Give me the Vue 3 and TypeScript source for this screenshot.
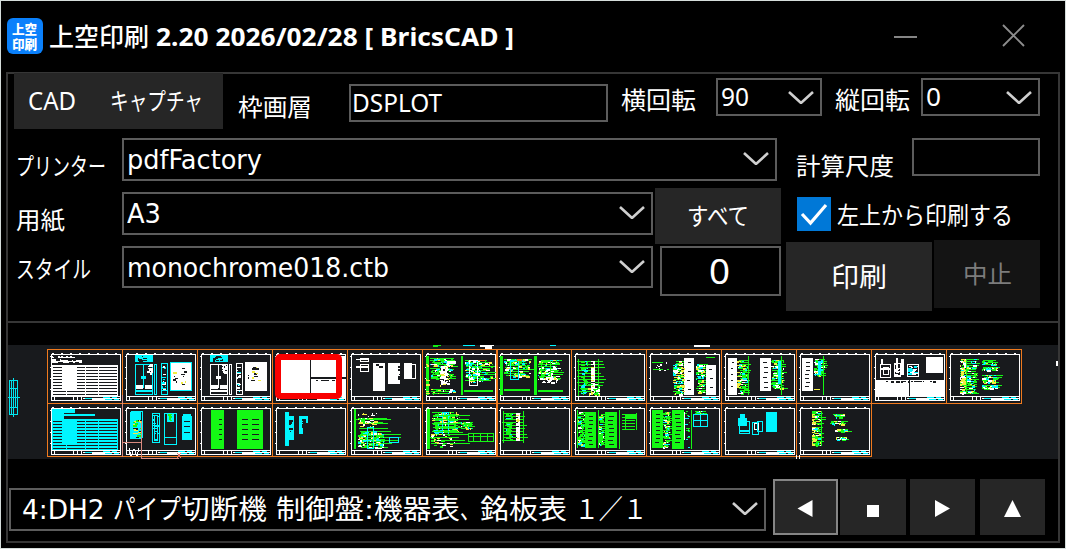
<script setup lang="ts">
import { ref, type Directive } from 'vue'

// Condenses or widens a label so that it occupies the given number of pixels.
const vFit: Directive<HTMLElement, number> = {
  mounted(el, binding) {
    const natural = el.getBoundingClientRect().width
    if (natural > 0) {
      el.style.transform = `scaleX(${binding.value / natural})`
      el.style.marginRight = `${binding.value - natural}px`
    }
  },
}

const layer = ref('DSPLOT')
const fromTopLeft = ref(true)
const sheetName = [
  { text: '4:DH2 ', width: 91 },
  { text: 'パイプ', width: 68 },
  { text: '切断機 ', width: 95 },
  { text: '制御盤:', width: 98 },
  { text: '機器表', width: 86 },
  { text: '、', width: 20 },
  { text: '銘板表', width: 87 },
  { text: ' １／１', width: 80 },
]

type Rect = [string, number, number, number, number]
interface Sheet { x: number; y: number; rects: Rect[] }

const W = '#ffffff'
const C = '#00f6ff'
const G = '#14f814'
const Y = '#f2ee40'
const K = '#181a1d'
const O = '#ee761c'

let seed = 11
function rnd(): number {
  seed = (seed * 16807) % 2147483647
  return seed / 2147483647
}
function box(c: string, x: number, y: number, w: number, h: number): Rect[] {
  return [[c, x, y, w, 1], [c, x, y + h - 1, w, 1], [c, x, y, 1, h], [c, x + w - 1, y, 1, h]]
}
function stripes(c: string, x: number, y: number, w: number, h: number, step: number): Rect[] {
  const out: Rect[] = []
  for (let i = 0; i < h; i += step) out.push([c, x, y + Math.floor(i), w, 1])
  return out
}
function noise(x: number, y: number, w: number, h: number, colors: string[], n: number): Rect[] {
  const out: Rect[] = []
  for (let i = 0; i < n; i++) {
    const rw = 1 + Math.floor(rnd() * 4)
    out.push([colors[Math.floor(rnd() * colors.length)], x + Math.floor(rnd() * Math.max(1, w - rw)), y + Math.floor(rnd() * h), rw, rnd() > 0.65 ? 2 : 1])
  }
  return out
}
function wires(x: number, y: number, w: number, h: number, step: number): Rect[] {
  const out: Rect[] = []
  for (let i = 0; i < h; i += step) out.push([G, x + Math.floor(rnd() * 4), y + i, w - Math.floor(rnd() * w * 0.35), 1])
  return out
}
function filled(c: string, x: number, y: number, w: number, h: number, gap = 4): Rect[] {
  const out: Rect[] = [[c, x, y, w, h]]
  for (let i = 4; i < h - 3; i += gap) out.push([K, x + 3 + Math.floor(rnd() * 2), y + i, Math.max(2, w - 7), 1])
  return out
}
function table(c: string): Rect[] {
  return [
    ...stripes(c, 5, 16, 66, 31, 3), ...stripes(c, 5, 17, 66, 30, 3), [c, 15, 17, 15, 24], [c, 5, 16, 1, 30], [c, 70, 16, 1, 30],
    [c, 38, 16, 1, 30], [c, 51, 16, 1, 30], [c, 19, 41, 1, 5],
  ]
}
function cabinet(c: string): Rect[] {
  return [
    [C, 13, 6, 18, 7], ...noise(16, 7, 12, 5, [K], 12), ...box(c, 13, 15, 18, 31), [c, 21, 15, 1, 24], [c, 19, 27, 5, 3],
    ...noise(25, 15, 7, 10, [W], 22), [W, 14, 36, 7, 4], [W, 23, 36, 7, 4], [c, 13, 41, 18, 2],
    ...box(c, 32, 15, 3, 31), ...box(c, 39, 14, 7, 32), ...noise(40, 17, 5, 25, [C, W, c], 20), [c, 39, 41, 7, 1],
    [W, 49, 14, 20, 27], ...box(c, 48, 13, 22, 29), ...noise(51, 18, 15, 18, [K, Y, K], 13),
  ]
}
function circuit(x: number, y: number, w: number, h: number, n = 70): Rect[] {
  return [...wires(x, y, w, h, 2), ...noise(x, y, w, h, [G, G, W, Y, C], Math.round(n * 1.2))]
}
function ladder(x: number, y: number, w: number, h: number): Rect[] {
  return [
    ...wires(x, y, w, h, 3), [G, x + 1, y - 2, 1, h + 4], [G, x + 21, y - 2, 1, h + 4],
    [W, x + 14, y, 4, h], ...noise(x + 14, y, 4, h, [K, Y], 10), ...noise(x + 4, y, 8, h, [C, G, G], 40),
  ]
}

const topRow: Rect[][] = [
  [[W, 5, 7, 23, 2], [W, 5, 11, 30, 3], [W, 5, 10, 9, 4], ...noise(5, 6, 28, 8, [K], 20), ...table(W)],
  cabinet(C),
  cabinet(W),
  [[W, 5, 7, 68, 42], [K, 38, 11, 1, 33], [K, 39, 28, 35, 2], [K, 44, 31, 2, 1], [K, 49, 31, 8, 1], [K, 60, 31, 3, 1]],
  [...box(W, 13, 9, 9, 4), [W, 9, 10, 12, 1], ...box(W, 13, 15, 9, 8), [W, 9, 17, 12, 2], [W, 26, 14, 12, 28], [W, 41, 14, 12, 21],
    ...noise(51, 17, 3, 16, [K], 9), ...noise(26, 15, 11, 3, [K], 4), [W, 57, 14, 8, 16], ...box(W, 57, 15, 12, 15)],
  [[G, 4, 7, 3, 39], ...noise(4, 7, 4, 39, [Y], 7), ...circuit(8, 9, 25, 22, 75), [W, 19, 17, 7, 19], [W, 25, 12, 9, 3], ...noise(18, 16, 12, 22, [K, W, Y], 40),
    ...circuit(8, 40, 27, 5, 14), [G, 39, 7, 2, 39], ...circuit(43, 11, 29, 22, 75), ...box(W, 47, 11, 9, 26), ...noise(46, 12, 15, 22, [W, C], 26), [O, 56, 11, 7, 1], [G, 42, 41, 29, 2]],
  [[G, 4, 7, 3, 39], ...circuit(8, 10, 28, 18, 85), ...box(C, 14, 11, 9, 20), [O, 21, 10, 5, 2], [G, 8, 40, 26, 2],
    [G, 38, 7, 3, 39], ...circuit(42, 11, 25, 20, 75), ...noise(46, 18, 18, 16, [W], 30), ...box(G, 45, 12, 10, 16), [G, 42, 41, 25, 2]],
  [...ladder(6, 12, 27, 33), ...noise(17, 35, 13, 11, [W, Y, G], 24)],
  [...wires(6, 13, 16, 9, 7), ...noise(10, 12, 12, 10, [W, K], 20), ...circuit(27, 12, 11, 34, 85), ...filled(W, 38, 9, 10, 37, 9),
    ...noise(35, 17, 5, 26, [Y], 16), ...circuit(50, 15, 10, 29, 54), ...filled(W, 60, 16, 10, 30, 9), [G, 60, 8, 9, 1]],
  [...filled(W, 7, 9, 9, 37, 6), ...circuit(17, 11, 11, 34, 70), ...noise(16, 12, 4, 30, [Y], 14), [G, 27, 7, 1, 39], ...filled(W, 39, 9, 11, 33, 5),
    ...circuit(50, 11, 14, 29, 68), [G, 60, 7, 1, 39], [C, 57, 12, 3, 23]],
  [...filled(W, 6, 9, 11, 33), ...circuit(18, 10, 12, 17, 50), [G, 27, 7, 1, 39], [C, 22, 12, 3, 14], [Y, 18, 40, 6, 1]],
  [...box(W, 9, 15, 11, 14), ...box(W, 12, 18, 6, 8), [W, 9, 19, 11, 2], [W, 10, 10, 2, 5], ...box(W, 23, 14, 7, 14), [W, 25, 9, 2, 15], [W, 30, 10, 3, 16],
    ...noise(23, 14, 8, 13, [W], 15), ...box(W, 36, 15, 12, 13), ...noise(37, 17, 11, 8, [W, C], 28), [W, 55, 8, 17, 16], [W, 4, 31, 70, 16],
    [K, 38, 30, 1, 17], ...noise(7, 32, 64, 1, [K], 17)],
  [...circuit(14, 10, 18, 35, 80), ...noise(14, 10, 8, 35, [Y, W, Y], 65), [G, 20, 10, 1, 35], ...circuit(36, 11, 16, 5, 17), ...circuit(36, 18, 17, 4, 18), ...circuit(36, 26, 19, 4, 23), ...circuit(36, 31, 16, 4, 20), ...circuit(36, 36, 18, 4, 23)],
]
const bottomRow: Rect[][] = [
  [[C, 5, 6, 23, 4], [C, 5, 11, 43, 2], [C, 5, 9, 12, 7], ...table(C)],
  [[C, 8, 9, 11, 27], ...box(C, 9, 8, 12, 27), ...noise(11, 17, 9, 18, [K, G, Y], 26), ...box(C, 30, 10, 8, 30), ...box(C, 32, 12, 4, 26), ...noise(30, 12, 9, 27, [C], 16),
    ...box(C, 42, 10, 13, 32), [C, 45, 10, 7, 9], ...noise(46, 11, 5, 8, [G], 8), [C, 42, 34, 13, 1], [C, 61, 11, 8, 26], [C, 60, 13, 10, 24], [K, 62, 18, 6, 1], [K, 62, 23, 6, 1], [K, 62, 29, 6, 1]],
  [[G, 14, 7, 13, 39], ...stripes(K, 22, 16, 3, 24, 5), [G, 40, 7, 26, 39], ...stripes(K, 45, 16, 6, 24, 5), ...stripes(K, 55, 16, 7, 24, 5)],
  [[C, 13, 9, 4, 34], [C, 17, 13, 5, 24], ...noise(17, 16, 3, 17, [K], 9), [C, 27, 13, 9, 7], [C, 27, 20, 4, 11], ...noise(30, 14, 5, 10, [K], 8)],
  [[G, 7, 6, 2, 40], ...wires(9, 15, 38, 2, 1), ...wires(9, 19, 36, 2, 1), ...noise(10, 10, 22, 15, [G, Y, W], 40), ...wires(12, 25, 42, 18, 3), ...circuit(11, 28, 27, 17, 85), ...box(C, 20, 24, 7, 22), ...box(C, 42, 34, 10, 6)],
  [[G, 5, 6, 3, 40], ...circuit(10, 9, 29, 21, 75), ...box(C, 20, 9, 7, 23), ...wires(9, 12, 37, 18, 4), ...circuit(39, 19, 12, 7, 27), ...wires(8, 31, 39, 12, 3), ...noise(9, 31, 25, 13, [G, Y, W], 36), ...box(G, 46, 30, 26, 9), [G, 46, 33, 26, 1], [G, 51, 30, 1, 8], [G, 58, 30, 1, 8], [G, 65, 30, 1, 8]],
  [...ladder(6, 10, 26, 28)],
  [...circuit(6, 9, 9, 34, 50), [G, 6, 7, 1, 38], ...filled(G, 14, 9, 11, 36, 4), ...circuit(27, 11, 7, 32, 40), [G, 27, 7, 1, 38], ...filled(G, 34, 9, 12, 36, 4), [G, 48, 7, 1, 39], ...stripes(G, 51, 11, 13, 17, 3), [G, 54, 11, 11, 5], [G, 54, 11, 1, 16], [G, 65, 10, 1, 17]],
  [...filled(G, 6, 7, 11, 38, 4), ...circuit(17, 9, 8, 36, 60), ...filled(G, 26, 7, 12, 39, 4), [W, 38, 9, 1, 28], ...noise(39, 7, 6, 38, [C, G], 18), [G, 45, 7, 1, 39], ...box(C, 47, 11, 15, 13), [C, 54, 11, 1, 13], [C, 47, 17, 15, 1], ...circuit(48, 8, 12, 3, 10)],
  [[C, 19, 11, 5, 10], [C, 17, 15, 9, 8], ...box(C, 18, 18, 11, 13), [C, 18, 27, 11, 2], ...box(C, 31, 19, 7, 13), ...box(W, 33, 20, 5, 7), ...box(C, 36, 18, 6, 11), [C, 45, 9, 11, 20]],
  [...circuit(16, 8, 11, 35, 70), ...noise(16, 8, 4, 35, [Y], 26), [K, 16, 22, 13, 2], [G, 25, 8, 1, 35], ...circuit(37, 11, 13, 4, 14), ...circuit(34, 18, 16, 4, 16), ...circuit(39, 26, 14, 3, 14), ...circuit(39, 34, 13, 3, 14)],
]
const pitch = 74.9
const sheets: Sheet[] = [
  ...topRow.map((rects, i) => ({ x: Math.round(39 + i * pitch), y: 4, rects })),
  ...bottomRow.map((rects, i) => ({ x: Math.round(39 + i * pitch), y: 58, rects })),
]
</script>

<template>
  <main class="window">
    <header class="titlebar">
      <div class="logo">上空印刷</div>
      <h1><span v-fit="100" class="t-jp">上空印刷</span><span v-fit="358" class="t-en">2.20 2026/02/28 [ BricsCAD ]</span></h1>
      <svg class="winbtn min" width="24" height="24" viewBox="0 0 24 24"><path d="M0 13H23" /></svg>
      <svg class="winbtn" width="24" height="24" viewBox="0 0 24 24"><path d="M1 1L22 22M22 1L1 22" /></svg>
    </header>

    <section class="panel">
      <div class="settings">
        <div class="row first">
          <div class="tabs">
            <span v-fit="48" class="txt">CAD</span>
            <span v-fit="93" class="txt tab-capture">キャプチャ</span>
          </div>
          <div class="lab lab-frame"><span v-fit="74" class="txt">枠画層</span></div>
          <div class="field f-layer"><span v-fit="90" class="txt">{{ layer }}</span></div>
          <div class="lab lab-h"><span v-fit="75" class="txt">横回転</span></div>
          <div class="field f-h"><span v-fit="28" class="txt">90</span><svg class="chev" viewBox="0 0 26 13"><path d="M1 1L13 12L25 1" /></svg></div>
          <div class="lab lab-v"><span v-fit="75" class="txt">縦回転</span></div>
          <div class="field f-v"><span v-fit="15" class="txt">0</span><svg class="chev" viewBox="0 0 26 13"><path d="M1 1L13 12L25 1" /></svg></div>
        </div>
        <div class="row second">
          <div class="lab lab-left"><span v-fit="90" class="txt">プリンター</span></div>
          <div class="field f-printer"><span v-fit="135" class="txt dv">pdfFactory</span><svg class="chev" viewBox="0 0 26 13"><path d="M1 1L13 12L25 1" /></svg></div>
          <div class="lab lab-scale"><span v-fit="98" class="txt">計算尺度</span></div>
          <div class="field f-scale"></div>
        </div>
        <div class="lower">
          <div class="lower-left">
            <div class="row third">
              <div class="lab lab-left"><span v-fit="49" class="txt">用紙</span></div>
              <div class="field f-paper"><span v-fit="34" class="txt dv">A3</span><svg class="chev" viewBox="0 0 26 13"><path d="M1 1L13 12L25 1" /></svg></div>
              <button class="btn all"><span v-fit="62" class="txt">すべて</span></button>
            </div>
            <div class="row fourth">
              <div class="lab lab-left"><span v-fit="75" class="txt">スタイル</span></div>
              <div class="field f-style"><span v-fit="262" class="txt dv">monochrome018.ctb</span><svg class="chev" viewBox="0 0 26 13"><path d="M1 1L13 12L25 1" /></svg></div>
              <div class="field f-count"><span v-fit="21" class="txt">0</span></div>
            </div>
          </div>
          <div class="lower-right">
            <div class="check">
              <svg width="34" height="34" viewBox="0 0 34 34"><rect width="34" height="34" fill="#0078d7" stroke="none" /><path v-if="fromTopLeft" d="M5 17L13.5 26L29 8" /></svg>
              <span v-fit="176" class="txt">左上から印刷する</span>
            </div>
            <div class="actions">
              <button class="btn print"><span v-fit="56" class="txt">印刷</span></button>
              <button class="btn stop"><span v-fit="49" class="txt">中止</span></button>
            </div>
          </div>
        </div>
      </div>

      <svg class="preview" width="1050" height="114" viewBox="0 0 1050 114" shape-rendering="crispEdges">
        <rect width="1050" height="114" fill="#181a1d" />
        <g fill="none" stroke="#00e5ee"><path d="M1.500 35.500H9.500V69.500H1.500ZM3.500 35V70M7.500 43V62M5.500 33V72M0 52.500H12M1 43.500H10M1 62.500H10" /></g>
        <path fill="#fff" d="M472 0H486V1H484V4H477V2H472ZM686 0H702V2H686ZM1048 16H1050V21H1048Z" />
        <path fill="#11ee11" d="M425 0H433V1H430V2H425Z" />
        <path fill="#00f6ff" d="M455 0H467V1H455ZM542 0H548V1H542Z" />
        <g v-for="(s, i) in sheets" :key="i" :transform="`translate(${s.x} ${s.y})`">
          <path d="M5 4.500H73" stroke="#fff" stroke-dasharray="2 7" />
          <path d="M3.500 7V47" stroke="#fff" stroke-dasharray="1 10" />
          <rect x="4.500" y="5.500" width="69" height="46" fill="none" stroke="#fff" />
          <rect v-for="(r, j) in s.rects" :key="j" :fill="r[0]" :x="r[1]" :y="r[2]" :width="r[3]" :height="r[4]" />
          <path d="M4 47.500H74M4 51.500H74M7.500 48V52M26.500 48V52M30.500 48V52M34.500 48V52M36 49.500H73M45 50.500H60" stroke="#fff" fill="none" />
          <path d="M38 49.500H47M56 48.500H70M58 50.500H72" stroke="#00f6ff" stroke-dasharray="7 2" />
        </g>
        <g fill="#f07a1e">
          <template v-for="(s, i) in sheets" :key="i">
            <rect :x="s.x" :y="s.y" width="76" height="1" />
            <rect :x="s.x" :y="s.y + (s.y < 50 ? 54 : 53)" width="76" height="1" />
            <rect :x="s.x" :y="s.y" width="1" height="54" />
            <rect :x="s.x + 75" :y="s.y" width="1" height="54" />
          </template>
        </g>
        <rect x="270" y="12" width="61" height="39" rx="2" fill="none" stroke="#f80000" stroke-width="6" shape-rendering="auto" />
        <path d="M114.500 50V112M114 97.500H134M133.500 76V113H171" fill="none" stroke="#d88a80" />
        <path d="M121 103L123 111L126 104L129 111L131 103" fill="none" stroke="#fff" />
        <path d="M169 108L173 113M173 108L169 113" stroke="#e9776c" />
        <path d="M788.500 110V114M791.500 110V114" stroke="#fff" />
      </svg>

      <footer class="bottom">
        <div class="field f-sheet">
          <span v-for="part in sheetName" :key="part.text" v-fit="part.width" class="txt dv">{{ part.text }}</span>
          <svg class="chev" viewBox="0 0 26 13"><path d="M1 1L13 12L25 1" /></svg>
        </div>
        <button class="btn nav active"><svg width="65" height="56"><path d="M24.500 29.500L39.500 21V38Z" /></svg></button>
        <button class="btn nav n2"><svg width="66" height="56"><path d="M27 26H39V38H27Z" /></svg></button>
        <button class="btn nav n3"><svg width="65" height="56"><path d="M25 21V38L40 29.500Z" /></svg></button>
        <button class="btn nav n4"><svg width="65" height="56"><path d="M24 38H41L32.500 21Z" /></svg></button>
      </footer>
    </section>
  </main>
</template>

<style>
body { margin: 0; background: #000; overflow: hidden; }
</style>

<style scoped>
* { box-sizing: border-box; }
.window {
  width: 1066px; height: 549px; background: #000; color: #fff;
  border: 1px solid #d5dddb;
  font-family: "Noto Sans", "Noto Sans CJK JP", sans-serif; font-size: 24px;
}
.titlebar { height: 71px; display: flex; align-items: flex-start; }
.logo {
  width: 36px; height: 36px; margin: 17px 0 0 6px; border-radius: 6px; background: #0a80fb;
  padding: 3px 5px; word-break: break-all;
  font: 900 12.6px/15px "Noto Sans CJK JP", sans-serif;
}
h1 { display: flex; margin: 20px 0 0 6px; width: 840px; font-size: 25px; line-height: 30px; white-space: pre; font-weight: 700; }
h1 span { flex: none; transform-origin: 0 50%; }
.t-jp { font-weight: 500; }
.t-en { margin-left: 7px; }
.winbtn { margin: 23px 0 0 84px; stroke: #8d8d8d; stroke-width: 1.9; fill: none; }
.winbtn.min { margin-left: 5px; }
.panel { width: 1054px; height: 471px; margin-left: 5px; border: 2px solid #363636; display: flex; flex-direction: column; }
.settings { height: 249px; border-bottom: 2px solid #363636; }
.row { display: flex; align-items: flex-start; }
.first { height: 64px; }
.second { height: 50px; }
.txt { display: inline-block; flex: none; white-space: pre; line-height: 30px; transform-origin: 0 50%; }
.dv { font-family: "DejaVu Sans", "Noto Sans CJK JP", sans-serif; }
.tabs { display: flex; width: 209px; height: 56px; margin: -1px 0 0 6px; padding: 12px 0 0 14px; background: #262626; flex: none; font-size: 26px; }
.tab-capture { margin-left: 34px; font-size: 24px; margin-top: 1px; }
.lab { flex: none; height: 30px; }
.lab-frame { width: 111px; margin: 16px 0 0 15px; }
.lab-h { width: 95px; margin: 9px 0 0 13px; }
.lab-v { width: 86px; margin: 9px 0 0 13px; }
.lab-left { width: 106px; margin: 11px 0 0 8px; }
.lab-scale { width: 116px; margin: 11px 0 0 19px; }
.field { flex: none; display: flex; border: 2px solid #5c5c5c; padding-left: 3px; position: relative; }
.chev { position: absolute; right: 6px; top: 12px; width: 26px; height: 13px; fill: none; stroke: #cfcfcf; stroke-width: 2.6; }
.f-layer { width: 259px; height: 38px; margin-top: 10px; padding-top: 1px; padding-left: 1px; font-size: 26px; }
.f-h { width: 106px; height: 38px; margin-top: 4px; padding-top: 1px; font-size: 26px; }
.f-v { width: 119px; height: 38px; margin-top: 4px; padding-top: 1px; font-size: 26px; }
.f-h .chev, .f-v .chev { top: 11px; }
.f-printer { width: 655px; height: 43px; padding-top: 5px; font-size: 26.5px; }
.f-scale { width: 128px; height: 38px; }
.lower { display: flex; }
.lower-left { width: 773px; flex: none; }
.third { height: 58px; }
.third .lab-left { margin-top: 15px; }
.fourth .lab-left { margin-top: 6px; }
.f-paper { width: 531px; height: 43px; margin-top: 4px; padding-top: 5px; font-size: 27px; }
.f-style { width: 531px; height: 42px; padding-top: 5px; font-size: 26.5px; }
.f-count { width: 121px; height: 50px; margin-left: 7px; padding: 8px 0 0 47px; font-size: 35px; }
.btn { border: 0; padding: 0; margin: 0; background: #262626; color: #fff; font: inherit; display: flex; justify-content: center; flex: none; }
.all { width: 126px; height: 56px; margin-left: 2px; padding-top: 13px; }
.lower-right { flex: 1; }
.check { display: flex; height: 52px; padding: 9px 0 0 16px; }
.check svg { fill: none; stroke: #fff; stroke-width: 3.2; flex: none; }
.check .txt { margin: 3px 0 0 6px; }
.actions { display: flex; padding-left: 5px; }
.print { width: 146px; height: 69px; margin-top: 2px; padding-top: 20px; font-size: 27px; }
.stop { width: 106px; height: 68px; margin-left: 2px; padding-top: 19px; background: #141414; color: #7c7c7c; }
.preview { display: block; margin-top: 22px; flex: none; }
.bottom { display: flex; margin-top: 20px; }
.f-sheet { width: 757px; height: 43px; margin: 9px 0 0 1px; padding: 5px 0 0 11px; font-size: 27px; }
.nav { width: 65px; height: 56px; margin-left: 7px; }
.nav svg { fill: #fff; display: block; flex: none; }
.nav.active { box-shadow: inset 0 0 0 2px #858585; }
.nav.n2 { width: 66px; margin-left: 2px; }
.nav.n3 { margin-left: 4px; }
.nav.n4 { margin-left: 5px; }
</style>
